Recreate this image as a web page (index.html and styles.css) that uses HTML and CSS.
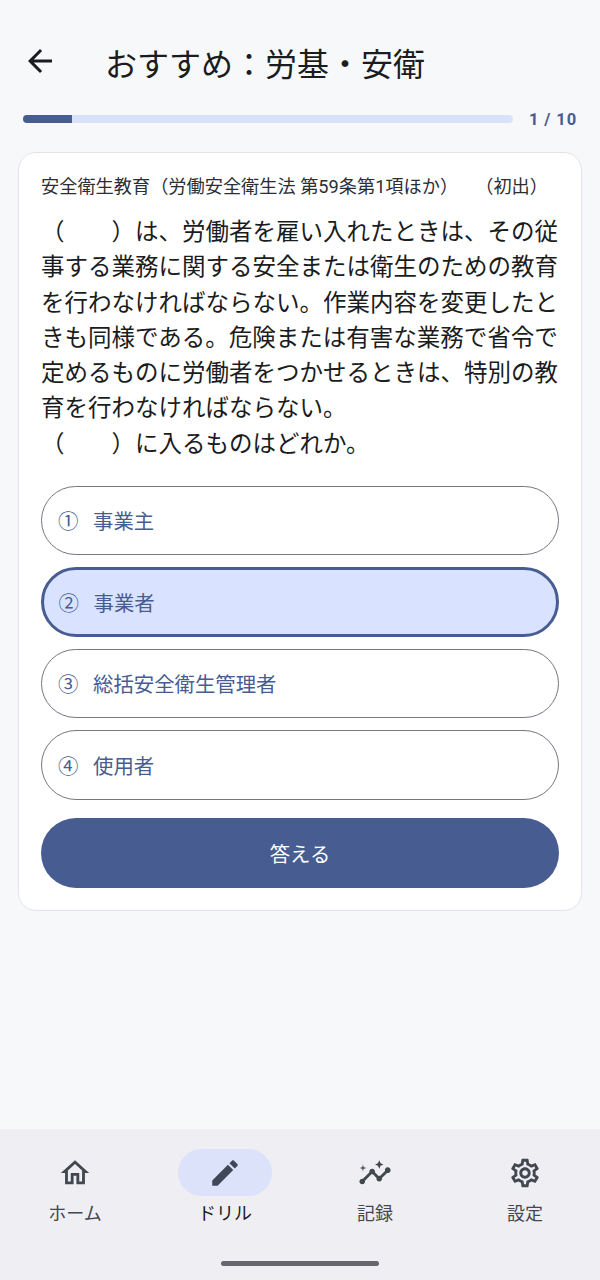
FILE: index.html
```html
<!DOCTYPE html>
<html lang="ja">
	<head>
		<meta charset="UTF-8">
		<title>おすすめ：労基・安衛</title>
		<link rel="stylesheet" href="styles.css">
	</head>
	<body>
		<div class="screen">
			<div class="head">
				<svg class="back" viewBox="0 0 24 24" width="36" height="36"><path d="M20 11H7.83l5.59-5.59L12 4l-8 8 8 8 1.41-1.41L7.83 13H20z"/></svg>
				<div class="title">おすすめ：労基・安衛</div>
			</div>
			<div class="progress">
				<div class="bar"><div class="bar-fill"></div></div>
				<div class="count">1 / 10</div>
			</div>
			<div class="card">
				<div class="meta">
					<span>安全衛生教育（労働安全衛生法 第59条第1項ほか）</span>
					<span>（初出）</span>
				</div>
				<div class="question">（　　）は、労働者を雇い入れたときは、その従事する業務に関する安全または衛生のための教育を行わなければならない。作業内容を変更したときも同様である。危険または有害な業務で省令で定めるものに労働者をつかせるときは、特別の教育を行わなければならない。<br>（　　）に入るものはどれか。</div>
				<div class="choices">
					<div class="choice"><span class="num">①</span>事業主</div>
					<div class="choice selected"><span class="num">②</span>事業者</div>
					<div class="choice"><span class="num">③</span>総括安全衛生管理者</div>
					<div class="choice"><span class="num">④</span>使用者</div>
				</div>
				<div class="answer">答える</div>
			</div>
			<div class="nav">
				<div class="nav-item">
					<div class="nav-icon"><svg viewBox="0 0 24 24" width="34" height="34"><path d="M12 5.69l5 4.5V18h-2v-6H9v6H7v-7.81l5-4.5M12 3L2 12h3v8h6v-6h2v6h6v-8h3L12 3z"/></svg></div>
					<div class="nav-label">ホーム</div>
				</div>
				<div class="nav-item active">
					<div class="nav-icon"><svg viewBox="0 0 24 24" width="34" height="34"><path d="M3 17.25V21h3.75L17.81 9.94l-3.75-3.75L3 17.25zM20.71 7.04c.39-.39.39-1.02 0-1.41l-2.34-2.34c-.39-.39-1.02-.39-1.41 0l-1.83 1.83 3.75 3.75 1.83-1.83z"/></svg></div>
					<div class="nav-label">ドリル</div>
				</div>
				<div class="nav-item">
					<div class="nav-icon"><svg viewBox="0 0 24 24" width="34" height="34"><path d="M21 8c-1.45 0-2.26 1.44-1.93 2.51l-3.55 3.56c-.3-.09-.74-.09-1.04 0l-2.55-2.55C12.27 10.45 11.46 9 10 9c-1.45 0-2.27 1.44-1.93 2.52l-4.56 4.55C2.44 15.74 1 16.55 1 18c0 1.1.9 2 2 2 1.45 0 2.26-1.44 1.93-2.51l4.55-4.56c.3.09.74.09 1.04 0l2.55 2.55C12.73 16.55 13.54 18 15 18c1.45 0 2.27-1.44 1.93-2.52l3.56-3.55c1.07.33 2.51-.48 2.51-1.93 0-1.1-.9-2-2-2z"/><path d="M15 9l.94-2.07L18 6l-2.06-.93L15 3l-.92 2.07L12 6l2.08.93zM3.5 11L4 9l2-.5L4 8l-.5-2L3 8l-2 .5L3 9z"/></svg></div>
					<div class="nav-label">記録</div>
				</div>
				<div class="nav-item">
					<div class="nav-icon"><svg viewBox="0 0 24 24" width="34" height="34"><path d="M19.43 12.98c.04-.32.07-.64.07-.98s-.03-.66-.07-.98l2.11-1.65c.19-.15.24-.42.12-.64l-2-3.46c-.12-.22-.39-.3-.61-.22l-2.49 1c-.52-.4-1.08-.73-1.69-.98l-.38-2.65C14.46 2.18 14.25 2 14 2h-4c-.25 0-.46.18-.49.42l-.38 2.65c-.61.25-1.17.59-1.69.98l-2.49-1c-.23-.09-.49 0-.61.22l-2 3.46c-.13.22-.07.49.12.64l2.11 1.65c-.04.32-.07.65-.07.98s.03.66.07.98l-2.11 1.65c-.19.15-.24.42-.12.64l2 3.46c.12.22.39.3.61.22l2.49-1c.52.4 1.08.73 1.69.98l.38 2.65c.03.24.24.42.49.42h4c.25 0 .46-.18.49-.42l.38-2.65c.61-.25 1.17-.59 1.69-.98l2.49 1c.23.09.49 0 .61-.22l2-3.46c.12-.22.07-.49-.12-.64l-2.11-1.65zM17.45 11.27c.04.31.05.52.05.73 0 .21-.02.43-.05.73l-.14 1.13.89.7 1.08.84-.7 1.21-1.27-.51-1.04-.42-.9.68c-.43.32-.84.56-1.25.73l-1.06.43-.16 1.13-.2 1.35h-1.4l-.19-1.35-.16-1.13-1.06-.43c-.43-.18-.83-.41-1.23-.71l-.91-.7-1.06.43-1.27.51-.7-1.21 1.08-.84.89-.7-.14-1.13c-.03-.31-.05-.54-.05-.74s.02-.43.05-.73l.14-1.13-.89-.7-1.08-.84.7-1.21 1.27.51 1.04.42.9-.68c.43-.32.84-.56 1.25-.73l1.06-.43.16-1.13.2-1.35h1.39l.19 1.35.16 1.13 1.06.43c.43.18.83.41 1.23.71l.91.7 1.06-.43 1.27-.51.7 1.21-1.07.85-.89.7.14 1.13zM12 8c-2.21 0-4 1.79-4 4s1.79 4 4 4 4-1.79 4-4-1.79-4-4-4zm0 6c-1.1 0-2-.9-2-2s.9-2 2-2 2 .9 2 2-.9 2-2 2z"/></svg></div>
					<div class="nav-label">設定</div>
				</div>
				<div class="home-bar"></div>
			</div>
		</div>
	</body>
</html>
```

FILE: styles.css
```css
*{
	margin: 0;
	padding: 0;
	box-sizing: border-box;
}
body{
	background-color: #f7f8fa;
	font-family: Roboto, "Noto Sans CJK JP", sans-serif;
	color: #1a1c20;
}
.screen{
	width: 600px;
	height: 1280px;
	display: flex;
	flex-direction: column;
}
.head{
	display: flex;
	align-items: center;
	height: 54px;
	margin-top: 34px;
	margin-bottom: 2px;
	padding-left: 22px;
}
.back{
	fill: #1a1c20;
}
.title{
	margin-left: 47px;
	padding-top: 2px;
	font-size: 32px;
	font-weight: 400;
	white-space: nowrap;
}
.progress{
	display: flex;
	align-items: center;
	margin-top: 14px;
	padding: 0 23px;
	height: 30px;
}
.bar{
	width: 490px;
	height: 8px;
	border-radius: 4px;
	background-color: #d9e2f9;
	overflow: hidden;
}
.bar-fill{
	width: 49px;
	height: 100%;
	background-color: #475d92;
}
.count{
	margin-left: 16px;
	font-size: 16.5px;
	font-weight: 700;
	letter-spacing: 0.9px;
	color: #475d92;
	white-space: nowrap;
}
.card{
	margin: 18px 18px 0;
	height: 759px;
	padding: 22px 22px;
	background-color: #fff;
	border: 1px solid #e2e4ea;
	border-radius: 18px;
}
.meta{
	display: flex;
	justify-content: space-between;
	padding-right: 11px;
	font-size: 18.2px;
	line-height: 24px;
	white-space: nowrap;
	color: #2b2e33;
}
.question{
	margin-top: 16px;
	font-size: 23.5px;
	line-height: 35.3px;
}
.choices{
	display: flex;
	flex-direction: column;
	gap: 12px;
	margin-top: 23.5px;
}
.choice{
	display: flex;
	align-items: center;
	height: 69.5px;
	padding-left: 16px;
	border: 1.5px solid #74777f;
	border-radius: 35px;
	font-size: 20.4px;
	color: #475d92;
}
.selected{
	background-color: #d9e2ff;
	border: 3px solid #475d92;
	padding-left: 14.5px;
}
.num{
	width: 35px;
	font-size: 20.4px;
}
.answer{
	height: 70px;
	margin-top: 18px;
	padding-top: 2px;
	border-radius: 35px;
	background-color: #475d92;
	color: #fff;
	font-size: 20.4px;
	line-height: 70px;
	text-align: center;
}
.nav{
	position: relative;
	display: flex;
	margin-top: auto;
	height: 151px;
	padding-top: 20px;
	background-color: #eeeef3;
}
.nav-item{
	flex: 1;
	display: flex;
	flex-direction: column;
	align-items: center;
}
.nav-icon{
	display: flex;
	align-items: center;
	justify-content: center;
	width: 94px;
	height: 47px;
	border-radius: 24px;
	fill: #43474e;
}
.active .nav-icon{
	background-color: #dbe2f9;
	fill: #3f4759;
}
.nav-label{
	margin-top: 4px;
	font-size: 18px;
	line-height: 28px;
	color: #43474e;
}
.active .nav-label{
	color: #1a1c20;
}
.home-bar{
	position: absolute;
	left: 221px;
	bottom: 14px;
	width: 158px;
	height: 5px;
	border-radius: 3px;
	background-color: #66666c;
}
```
